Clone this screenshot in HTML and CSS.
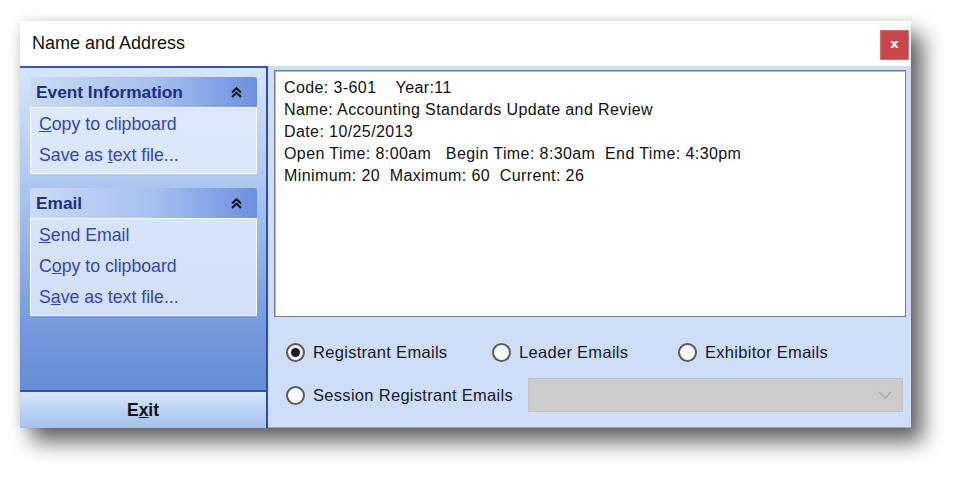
FILE: index.html
```html
<!DOCTYPE html>
<html lang="en">
<head>
    <meta charset="UTF-8">
    <meta name="viewport" content="width=device-width, initial-scale=1.0">
    <title>Name and Address</title>
    <link rel="stylesheet" href="styles.css">
</head>
<body>
    <div class="window">
        <!-- title bar -->
        <div class="titlebar">
            <span class="title">Name and Address</span>
            <button class="close-button">x</button>
        </div>

        <div class="content">
            <!-- left task panel -->
            <aside class="sidebar">
                <div class="tasks">
                    <section class="group">
                        <div class="group-head">
                            <span>Event Information</span>
                            <svg class="chevron" width="11" height="11" viewBox="0 0 11 11"><path d="M1 5.5 L5.5 1.2 L10 5.5 M1 10 L5.5 5.7 L10 10" fill="none" stroke="#111" stroke-width="2"/></svg>
                        </div>
                        <ul class="group-body">
                            <li><u>C</u>opy to clipboard</li>
                            <li>Save as <u>t</u>ext file...</li>
                        </ul>
                    </section>

                    <section class="group">
                        <div class="group-head">
                            <span>Email</span>
                            <svg class="chevron" width="11" height="11" viewBox="0 0 11 11"><path d="M1 5.5 L5.5 1.2 L10 5.5 M1 10 L5.5 5.7 L10 10" fill="none" stroke="#111" stroke-width="2"/></svg>
                        </div>
                        <ul class="group-body">
                            <li><u>S</u>end Email</li>
                            <li>C<u>o</u>py to clipboard</li>
                            <li>S<u>a</u>ve as text file...</li>
                        </ul>
                    </section>
                </div>
                <div class="exit-bar">E<u>x</u>it</div>
            </aside>

            <!-- event details and email options -->
            <main class="details">
                <div class="info-box">
                    <div class="info-line">Code: 3-601    Year:11</div>
                    <div class="info-line">Name: Accounting Standards Update and Review</div>
                    <div class="info-line">Date: 10/25/2013</div>
                    <div class="info-line">Open Time: 8:00am   Begin Time: 8:30am  End Time: 4:30pm</div>
                    <div class="info-line">Minimum: 20  Maximum: 60  Current: 26</div>
                </div>

                <div class="options">
                    <div class="option-row">
                        <label class="radio radio-first"><span class="dot checked"></span>Registrant Emails</label>
                        <label class="radio radio-second"><span class="dot"></span>Leader Emails</label>
                        <label class="radio"><span class="dot"></span>Exhibitor Emails</label>
                    </div>
                    <div class="option-row second-row">
                        <label class="radio radio-session"><span class="dot"></span>Session Registrant Emails</label>
                        <div class="combo">
                            <svg width="14" height="8" viewBox="0 0 14 8"><path d="M1 1 L7 7 L13 1" fill="none" stroke="#a9a9a9" stroke-width="1.3"/></svg>
                        </div>
                    </div>
                </div>
            </main>
        </div>
    </div>
</body>
</html>
```

FILE: styles.css
```css
body {
    margin: 0;
    min-height: 485px;
    background-color: #fff;
    font-family: "Liberation Sans", Arial, sans-serif;
}

.window {
    width: 891px;
    height: 407px;
    margin: 21px 0 0 20px;
    display: flex;
    flex-direction: column;
    background-color: #fff;
    box-shadow: 12px 14px 20px rgba(0, 0, 0, 0.6), 0 0 10px rgba(0, 0, 0, 0.12);
}

.titlebar {
    height: 45px;
    display: flex;
    align-items: flex-start;
    justify-content: space-between;
    flex-shrink: 0;
}

.title {
    margin: 12px 0 0 12px;
    font-size: 18px;
    color: #111;
}

.close-button {
    width: 29px;
    height: 30px;
    margin: 9px 2px 0 0;
    padding: 0 0 3px 0;
    background-color: #c9474b;
    border: 1px solid #d86e70;
    color: #fff;
    font-family: "DejaVu Sans", sans-serif;
    font-weight: bold;
    font-size: 13px;
}

.content {
    flex: 1;
    display: flex;
}

/* left task panel */
.sidebar {
    width: 246px;
    display: flex;
    flex-direction: column;
    border-top: 2px solid #3458b8;
    border-right: 2px solid #2a4fae;
    background: linear-gradient(#d7e5f9, #a3bfec 40%, #7097db 75%, #5d86d0);
}

.tasks {
    flex: 1;
    padding: 9px 9px 0 10px;
}

.group {
    margin-bottom: 14px;
}

.group-head {
    height: 30px;
    display: flex;
    align-items: center;
    justify-content: space-between;
    padding: 0 15px 0 6px;
    border-radius: 3px 3px 0 0;
    background: linear-gradient(to right, #cbdaf5, #a5bff0 55%, #6c90de);
    color: #1d2f80;
    font-weight: bold;
    font-size: 17.3px;
}

.chevron {
    display: block;
}

.group-body {
    list-style: none;
    margin: 0;
    padding: 1px 0 2px 8px;
    border: 1px solid #fff;
    background-color: rgba(224, 235, 252, 0.85);
}

.group-body li {
    height: 31px;
    line-height: 31px;
    font-size: 17.7px;
    color: #3344b8;
}

.exit-bar {
    height: 36px;
    line-height: 36px;
    text-align: center;
    border-top: 2px solid #2c53b2;
    background: linear-gradient(#dae7fb, #bcd2f4 50%, #a7c1ec);
    font-weight: bold;
    font-size: 17.5px;
    color: #111;
}

/* details */
.details {
    flex: 1;
    padding: 4px 5px 0 6px;
    background-color: #cfdef8;
    border-bottom: 1px solid #9aa6b8;
}

.info-box {
    height: 233px;
    padding: 6px 9px;
    background-color: #fff;
    border: 1px solid #7a7f88;
    box-shadow: inset 1px 1px 0 #b9b9b9;
}

.info-line {
    height: 22px;
    line-height: 22px;
    font-size: 16px;
    letter-spacing: 0.4px;
    white-space: pre;
    color: #111;
}

.options {
    padding: 17px 0 0 12px;
}

.option-row {
    height: 36px;
    display: flex;
    align-items: center;
}

.second-row {
    height: 34px;
    margin-top: 8px;
}

.radio {
    display: flex;
    align-items: center;
    gap: 8px;
    font-size: 16.5px;
    letter-spacing: 0.3px;
    color: #16162a;
}

.radio-first {
    width: 206px;
}

.radio-second {
    width: 186px;
}

.radio-session {
    width: 242px;
}

.dot {
    width: 15px;
    height: 15px;
    border: 2px solid #5a5a5a;
    border-radius: 50%;
    background: linear-gradient(#f4f4f4, #fff);
    display: flex;
    align-items: center;
    justify-content: center;
}

.dot.checked::after {
    content: "";
    width: 9px;
    height: 9px;
    border-radius: 50%;
    background-color: #1c1c1c;
}

.combo {
    width: 375px;
    height: 34px;
    display: flex;
    align-items: center;
    justify-content: flex-end;
    padding-right: 10px;
    box-sizing: border-box;
    background-color: #cccccc;
    border: 1px solid #c2c2c2;
}
```
